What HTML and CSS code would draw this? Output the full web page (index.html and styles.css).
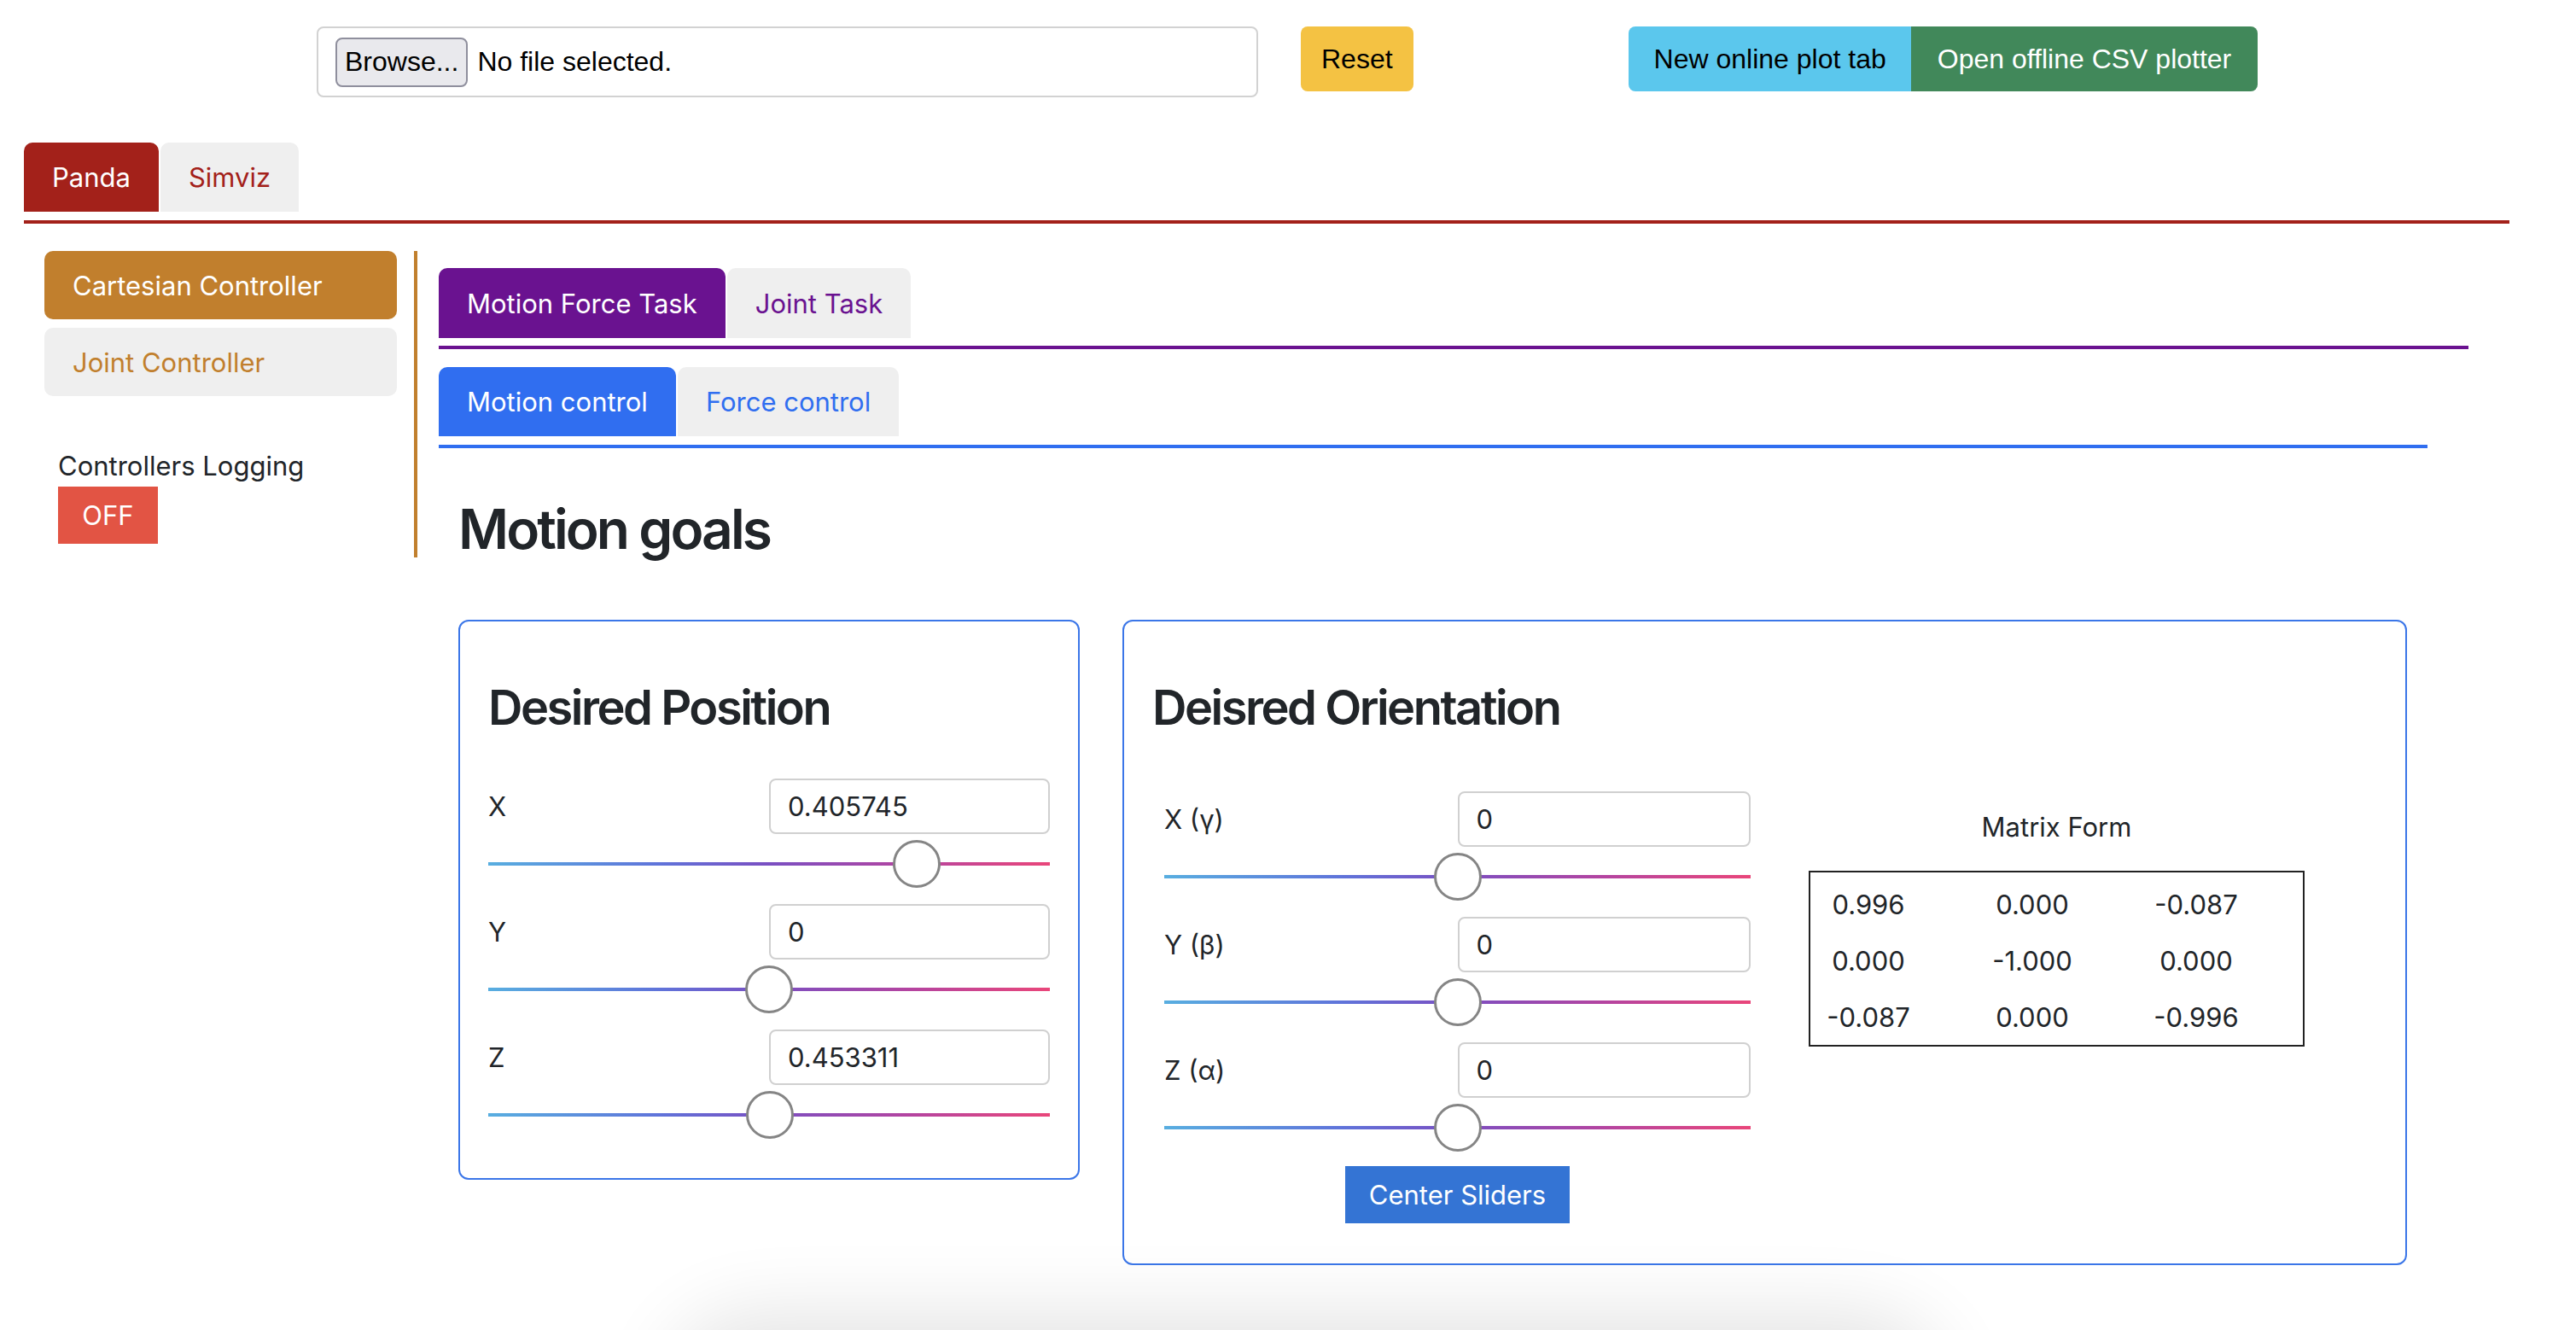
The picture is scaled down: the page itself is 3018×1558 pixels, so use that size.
FILE: index.html
```html
<!DOCTYPE html>
<html lang="en">
<head>
<meta charset="utf-8">
<title>Panda Controller</title>
<link rel="stylesheet" href="styles.css">
</head>
<body>
<div class="page">
  <div class="topbar">
    <div class="file-input"><span class="browse">Browse...</span><span class="file-name">No file selected.</span></div>
    <button class="btn btn-reset">Reset</button>
    <div class="btn-group">
      <button class="btn btn-online">New online plot tab</button>
      <button class="btn btn-offline">Open offline CSV plotter</button>
    </div>
  </div>

  <nav class="tabs tabs-robot">
    <span class="tab active">Panda</span>
    <span class="tab">Simviz</span>
  </nav>

  <div class="layout">
    <aside class="sidebar">
      <div class="ctrl active">Cartesian Controller</div>
      <div class="ctrl">Joint Controller</div>
      <div class="logging-label">Controllers Logging</div>
      <button class="btn-off">OFF</button>
    </aside>

    <main class="content">
      <nav class="tabs tabs-task">
        <span class="tab active">Motion Force Task</span>
        <span class="tab">Joint Task</span>
      </nav>
      <div class="subpanel">
        <nav class="tabs tabs-control">
          <span class="tab active">Motion control</span>
          <span class="tab">Force control</span>
        </nav>
        <div class="panel-body">
          <h2 class="goals-title">Motion goals</h2>
          <div class="cards">
            <section class="card card-pos">
              <h3 class="card-title">Desired Position</h3>
              <div class="fields">
                <div class="field">
                  <label class="field-label">X</label>
                  <input class="num" type="text" value="0.405745">
                  <input class="slider" type="range" min="-0.2" max="0.57" step="any" value="0.405745">
                </div>
                <div class="field">
                  <label class="field-label">Y</label>
                  <input class="num" type="text" value="0">
                  <input class="slider" type="range" min="-1" max="1" step="any" value="0">
                </div>
                <div class="field">
                  <label class="field-label">Z</label>
                  <input class="num" type="text" value="0.453311">
                  <input class="slider" type="range" min="-0.5" max="1.4" step="any" value="0.453311">
                </div>
              </div>
            </section>

            <section class="card card-ori">
              <h3 class="card-title">Deisred Orientation</h3>
              <div class="ori-body">
                <div class="ori-left">
                  <div class="fields">
                    <div class="field">
                      <label class="field-label">X (γ)</label>
                      <input class="num" type="text" value="0">
                      <input class="slider" type="range" min="-1" max="1" step="any" value="0">
                    </div>
                    <div class="field">
                      <label class="field-label">Y (β)</label>
                      <input class="num" type="text" value="0">
                      <input class="slider" type="range" min="-1" max="1" step="any" value="0">
                    </div>
                    <div class="field">
                      <label class="field-label">Z (α)</label>
                      <input class="num" type="text" value="0">
                      <input class="slider" type="range" min="-1" max="1" step="any" value="0">
                    </div>
                  </div>
                  <button class="btn-center">Center Sliders</button>
                </div>
                <div class="ori-right">
                  <div class="matrix-title">Matrix Form</div>
                  <div class="matrix">
                    <span>0.996</span><span>0.000</span><span>-0.087</span>
                    <span>0.000</span><span>-1.000</span><span>0.000</span>
                    <span>-0.087</span><span>0.000</span><span>-0.996</span>
                  </div>
                </div>
              </div>
            </section>
          </div>
        </div>
      </div>
    </main>
  </div>
</div>
<div class="dock-shadow"></div>
</body>
</html>
```

FILE: styles.css
```css
* { box-sizing: border-box; }

html, body {
  margin: 0;
  background: #ffffff;
}

body {
  font-family: Inter, "Noto Sans", sans-serif;
  font-size: 31px;
  color: #212529;
  overflow: hidden;
  height: 1558px;
}

.page {
  margin: 0 78px 0 28px;
}

/* ---------- top bar ---------- */
.topbar {
  display: flex;
  align-items: flex-start;
  padding-top: 31px;
  font-family: "Liberation Sans", Arial, sans-serif;
  font-size: 32px;
}

.file-input {
  margin-left: 343px;
  width: 1103px;
  height: 83px;
  border: 2px solid #d2d2d2;
  border-radius: 8px;
  display: flex;
  align-items: center;
  padding-left: 20px;
  color: #000;
}

.browse {
  height: 58px;
  padding: 0 9px;
  display: flex;
  align-items: center;
  border: 2px solid #8f8f9d;
  border-radius: 8px;
  background: #e9e9ed;
  color: #000;
}

.file-name {
  margin-left: 11px;
}

.btn {
  font-family: "Liberation Sans", Arial, sans-serif;
  font-size: 32px;
  border: none;
  height: 76px;
  padding: 0 24px;
  cursor: pointer;
}

.btn-reset {
  margin-left: 50px;
  background: #f4c243;
  color: #000;
  border-radius: 8px;
}

.btn-group {
  margin-left: 252px;
  display: flex;
}

.btn-online {
  background: #5bc7ed;
  color: #000;
  padding: 0 29px 0 30px;
  border-radius: 8px 0 0 8px;
}

.btn-offline {
  background: #41885a;
  color: #fff;
  padding: 0 31px;
  border-radius: 0 8px 8px 0;
}

/* ---------- tabs ---------- */
.tabs {
  display: flex;
  gap: 2px;
}

.tab {
  height: 81px;
  padding: 0 33px;
  display: flex;
  align-items: center;
  border-radius: 10px 10px 0 0;
  background: #efefef;
}

.tabs-robot {
  margin-top: 53px;
  padding-bottom: 10px;
  border-bottom: 4px solid #a3211a;
}
.tabs-robot .tab { color: #a3211a; }
.tabs-robot .tab.active { background: #a3211a; color: #fff; }

.tabs-task {
  margin-top: 20px;
  padding-bottom: 9px;
  border-bottom: 4px solid #6a1290;
}
.tabs-task .tab { height: 82px; color: #6a1290; }
.tabs-task .tab.active { background: #6a1290; color: #fff; }

.tabs-control {
  margin-top: 21px;
  padding-bottom: 10px;
  border-bottom: 4px solid #306ef0;
}
.tabs-control .tab { color: #306ef0; }
.tabs-control .tab.active { background: #306ef0; color: #fff; }

/* ---------- layout ---------- */
.layout {
  display: flex;
  align-items: flex-start;
  margin-top: 32px;
}

.sidebar {
  width: 461px;
  flex: none;
  padding: 0 20px 16px 24px;
  border-right: 4px solid #c17f2d;
}

.ctrl {
  height: 80px;
  margin-bottom: 10px;
  padding-left: 33px;
  display: flex;
  align-items: center;
  border-radius: 10px;
  background: #efefef;
  color: #c17f2d;
}

.ctrl.active {
  background: #c17f2d;
  color: #fff;
}

.logging-label {
  margin-top: 58px;
  padding-left: 16px;
  line-height: 48px;
}

.btn-off {
  margin-left: 16px;
  width: 117px;
  height: 67px;
  border: none;
  background: #e25444;
  color: #fff;
  font-family: Inter, sans-serif;
  font-size: 31px;
  display: block;
}

.content {
  flex: 1;
  min-width: 0;
  margin-left: 25px;
  margin-right: 48px;
}

.subpanel {
  margin-right: 48px;
}

.panel-body {
  padding: 0 24px 0 23px;
}

.goals-title {
  margin: 56px 0 68px;
  font-size: 64px;
  font-weight: 600;
  letter-spacing: -2.9px;
  line-height: 77px;
}

/* ---------- cards ---------- */
.cards {
  display: flex;
  align-items: flex-start;
  gap: 50px;
}

.card {
  border: 2px solid #3b76e8;
  border-radius: 12px;
  padding: 68px 33px 46px;
}

.card-pos { width: 728px; }
.card-ori { width: 1505px; padding-bottom: 47px; }

.card-title {
  margin: 0 0 49px;
  font-size: 56px;
  font-weight: 600;
  letter-spacing: -2.5px;
  line-height: 67px;
}

.fields {
  display: flex;
  flex-direction: column;
  gap: 19px;
}

.field {
  display: grid;
  grid-template-columns: 1fr 1fr;
  row-gap: 7px;
  align-items: center;
}

.field-label {
  line-height: 48px;
}

.num {
  width: 100%;
  height: 65px;
  border: 2px solid #d0d0d0;
  border-radius: 8px;
  padding: 0 20px;
  font-family: Inter, sans-serif;
  font-size: 31px;
  color: #212529;
  background: #fff;
}

.slider {
  grid-column: 1 / 3;
  -webkit-appearance: none;
  appearance: none;
  display: block;
  width: 100%;
  height: 56px;
  margin: 0;
  background: transparent;
}

.slider::-webkit-slider-runnable-track {
  height: 4px;
  background: linear-gradient(to right, #58aee0 0%, #5f74da 30%, #7a4fc2 50%, #b444a0 75%, #e9467a 100%);
  border: none;
}

.slider::-webkit-slider-thumb {
  -webkit-appearance: none;
  appearance: none;
  box-sizing: border-box;
  width: 56px;
  height: 56px;
  margin-top: -26px;
  border-radius: 50%;
  background: #fff;
  border: 3px solid #858585;
}

.ori-body {
  display: flex;
  align-items: flex-start;
}

.ori-left {
  width: 715px;
  flex: none;
  padding: 15px 14px 0;
}

.btn-center {
  display: block;
  margin: 17px auto 0;
  width: 263px;
  height: 67px;
  border: none;
  background: #3474d4;
  color: #fff;
  font-family: Inter, sans-serif;
  font-size: 31px;
}

.ori-right {
  padding: 33px 0 0 54px;
}

.matrix-title {
  width: 581px;
  text-align: center;
  line-height: 48px;
  margin-bottom: 27px;
}

.matrix {
  width: 581px;
  border: 2px solid #222;
  padding-top: 4px;
  display: grid;
  grid-template-columns: repeat(3, 136px);
  column-gap: 56px;
  grid-auto-rows: 66px;
  align-items: center;
  text-align: center;
}

/* soft shadow peeking at the bottom of the window */
.dock-shadow {
  position: fixed;
  left: 830px;
  bottom: -140px;
  width: 1400px;
  height: 110px;
  border-radius: 60px;
  background: #e2e2e2;
  box-shadow: 0 0 90px 50px rgba(0, 0, 0, 0.11);
}
```
